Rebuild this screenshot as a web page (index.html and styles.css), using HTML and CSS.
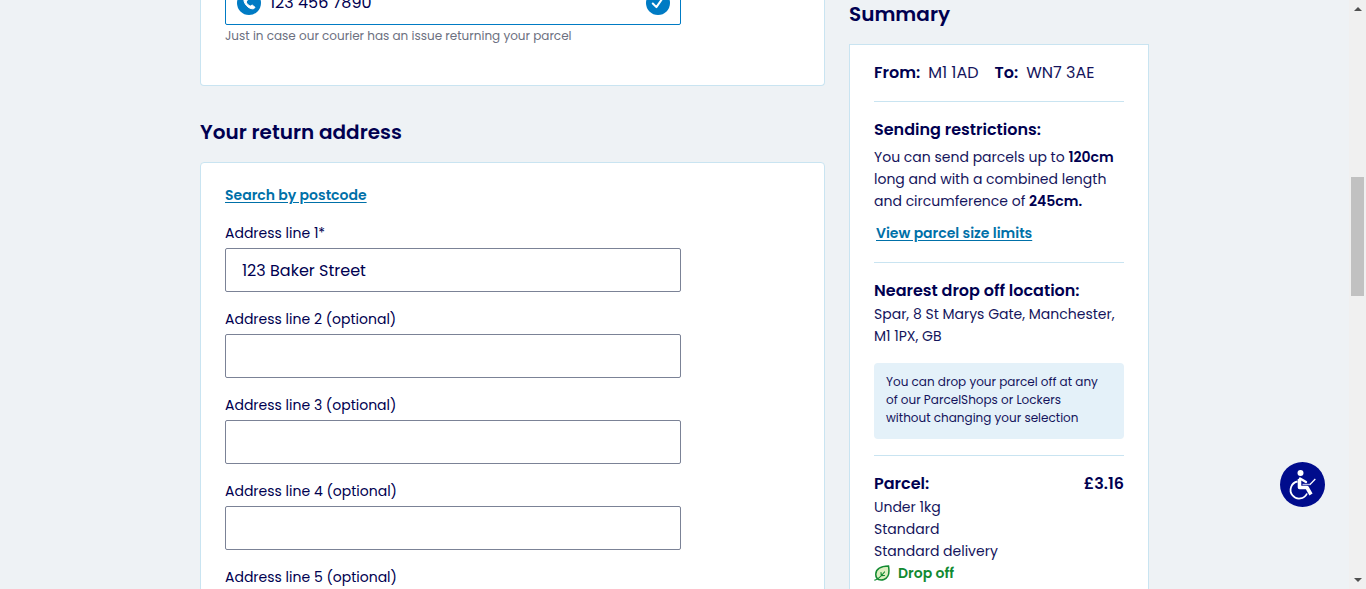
FILE: index.html
```html
<!DOCTYPE html>
<html lang="en">
<head>
<meta charset="utf-8">
<meta name="viewport" content="width=device-width, initial-scale=1">
<title>Your return address</title>
<link rel="stylesheet" href="styles.css">
</head>
<body>
<div class="viewport">
  <div class="page">
    <main class="details">
      <section class="card contact">
        <div class="phone">
          <svg class="badge" viewBox="0 0 24 24" aria-hidden="true"><circle cx="12" cy="12" r="12" fill="#007bc4"/><path d="M8 6c-1.500 1.500-1.400 4 0 6.500 1.600 2.800 4 4.800 7 5.300 1.300.2 2.500-.3 3-1.500l-2.800-2.300-1.900 1.100c-1.700-.6-3.500-2.300-4.200-4.100l1.200-1.800z" fill="#fff" stroke="#fff" stroke-linejoin="round"/></svg>
          <input class="phone-input" type="tel" aria-label="Phone number" value="123 456 7890">
          <svg class="badge" viewBox="0 0 24 24" aria-hidden="true"><circle cx="12" cy="12" r="12" fill="#007bc4"/><path d="m6.800 12.500 3.600 3.600 5.600-8" fill="none" stroke="#fff" stroke-width="2" stroke-linecap="round" stroke-linejoin="round"/></svg>
        </div>
        <p class="hint">Just in case our courier has an issue returning your parcel</p>
      </section>
      <h2 class="title address-title">Your return address</h2>
      <form class="card address">
        <a class="link" href="#">Search by postcode</a>
        <div class="field"><label for="line1">Address line 1*</label><input id="line1" type="text" value="123 Baker Street"></div>
        <div class="field"><label for="line2">Address line 2 (optional)</label><input id="line2" type="text"></div>
        <div class="field"><label for="line3">Address line 3 (optional)</label><input id="line3" type="text"></div>
        <div class="field"><label for="line4">Address line 4 (optional)</label><input id="line4" type="text"></div>
        <div class="field"><label for="line5">Address line 5 (optional)</label><input id="line5" type="text"></div>
      </form>
    </main>
    <aside class="summary">
      <h2 class="title">Summary</h2>
      <div class="summary-card">
        <section class="block route">
          <span class="leg"><strong>From:</strong><span class="postcode">M1 1AD</span></span>
          <span class="leg"><strong>To:</strong><span class="postcode">WN7 3AE</span></span>
        </section>
        <section class="block">
          <h3>Sending restrictions:</h3>
          <p class="limits">You can send parcels up to <strong>120cm</strong> long and with a combined length and circumference of <strong>245cm.</strong></p>
          <a class="link limits-link" href="#">View parcel size limits</a>
        </section>
        <section class="block">
          <h3>Nearest drop off location:</h3>
          <p>Spar, 8 St Marys Gate, Manchester, M1 1PX, GB</p>
          <p class="note">You can drop your parcel off at any of our ParcelShops or Lockers without changing your selection</p>
        </section>
        <section class="block">
          <div class="price-row"><h3>Parcel:</h3><strong>£3.16</strong></div>
          <p>Under 1kg</p>
          <p>Standard</p>
          <p>Standard delivery</p>
          <p class="drop-off">
            <svg class="leaf" viewBox="0 0 16 16" aria-hidden="true"><path d="M14.500 1C9 1.200 2 3 1.800 9c-.1 2.800 1 4.700 2.700 5.500 3.500 1.200 7.800-.2 9.400-3.500 1.500-3 1.200-6.500.6-10z" fill="#dcefc0" stroke="#128a31" stroke-width="1.500"/><path d="M.8 15.200c2.200-.5 6-3.500 9.700-8.200M7 7.500l.3 3.200 3.200-.2" fill="none" stroke="#128a31" stroke-width="1.200" stroke-linecap="round"/></svg>
            Drop off
          </p>
        </section>
      </div>
    </aside>
  </div>
  <div class="scrollbar" aria-hidden="true">
    <svg class="arrow" viewBox="0 0 8 4"><path d="M0 4 4 0l4 4z" fill="#505050"/></svg>
    <div class="track"><div class="thumb"></div></div>
    <svg class="arrow" viewBox="0 0 8 4"><path d="m0 0 4 4 4-4z" fill="#505050"/></svg>
  </div>
</div>
<button class="access" type="button" aria-label="Accessibility options">
  <svg viewBox="0 0 45 45" aria-hidden="true"><circle cx="20.500" cy="11" r="3" fill="#fff"/><path d="M17.500 19.500a8.600 8.600 0 1 0 9.500 12" fill="none" stroke="#fff" stroke-width="1.800"/><path d="M19.500 17v8.500h7.500l4 7" fill="none" stroke="#fff" stroke-width="3.600" stroke-linejoin="round"/><path d="m20 16.500 6 3.500" fill="none" stroke="#fff" stroke-width="2.400" stroke-linecap="round"/><path d="M22.500 22.500h8" stroke="#b5b8e8" stroke-width="1.400"/><path d="m30 22.500 5.300-5.500" stroke="#fff" stroke-width="1.200"/></svg>
</button>
</body>
</html>
```
FILE: styles.css
```css
* { box-sizing: border-box; }
body {
  margin: 0;
  background: #eef2f5;
  color: #000050;
  font: 14px/22px Poppins, Inter, "Open Sans", sans-serif;
}
h2, h3, p { margin: 0; }
h3, strong { font-weight: 600; }
input { font: inherit; color: inherit; }
.viewport { display: flex; height: 100vh; overflow: hidden; }
.page {
  flex: 1;
  display: grid;
  grid-template-columns: minmax(0, 1fr) 300px;
  gap: 24px;
  align-items: start;
  max-width: 949px;
  margin: 0 auto;
}
.title { font-size: 20px; line-height: 28px; font-weight: 600; }
.card, .summary-card { background: #fff; border: 1px solid #c9e4f1; }
.card { border-radius: 4px; padding: 21px 24px; }
.contact { border-top: 0; padding: 0 24px 40px; }
.phone {
  display: flex;
  align-items: center;
  gap: 9px;
  max-width: 456px;
  height: 44px;
  margin-top: -19px;
  padding: 0 10px 0 11px;
  border: 1px solid #007bc4;
  border-radius: 2px;
}
.badge { width: 24px; height: 24px; flex: none; }
.phone-input { flex: 1; min-width: 0; padding: 0; border: 0; outline: 0; background: none; font-size: 16px; }
.hint { padding-top: 2px; font-size: 12px; line-height: 18px; color: #6c7080; }
.address-title { margin: 32px 0 16px; }
.address { display: flex; flex-direction: column; gap: 16px; }
.link { align-self: flex-start; color: #0070a8; font-weight: 600; text-underline-offset: 2px; }
.field { display: flex; flex-direction: column; gap: 4px; max-width: 456px; }
.field input {
  width: 100%;
  height: 44px;
  padding: 0 16px;
  border: 1px solid #7b8296;
  border-radius: 2px;
  background: #fff;
  font-size: 16px;
}
.summary-card { margin-top: 16px; padding: 0 24px; }
.block { padding: 16px 0; }
.block + .block { border-top: 1px solid #c9e4f1; }
.block p, .postcode { color: #14145c; }
.block p strong { color: #000050; }
.block h3, .route, .price-row { font-size: 16px; line-height: 24px; }
.route, .price-row { display: flex; gap: 16px; }
.price-row { justify-content: space-between; }
.leg { display: flex; gap: 8px; }
.limits { padding: 4px 0 10px; }
.limits-link { display: inline-block; margin-bottom: 2px; padding: 0 2px; }
.block .note {
  margin-top: 16px;
  padding: 10px 18px 12px 12px;
  border-radius: 4px;
  background: #e4f1f9;
  font-size: 12px;
  line-height: 18px;
}
.block .drop-off { display: flex; align-items: center; gap: 8px; color: #128a31; font-weight: 600; }
.leaf { width: 16px; height: 16px; }
.scrollbar {
  flex: none;
  display: flex;
  flex-direction: column;
  align-items: center;
  width: 17px;
  padding: 7px 0;
  background: #f0f0f0;
}
.arrow { width: 8px; height: 4px; }
.track { flex: 1; width: 13px; padding-top: 166px; }
.thumb { height: 119px; background: #c1c1c1; }
.access {
  position: fixed;
  right: 41px;
  bottom: 82px;
  width: 45px;
  height: 45px;
  padding: 0;
  border: 0;
  border-radius: 50%;
  background: #000c8c;
}
.access svg { display: block; width: 45px; height: 45px; }
```
